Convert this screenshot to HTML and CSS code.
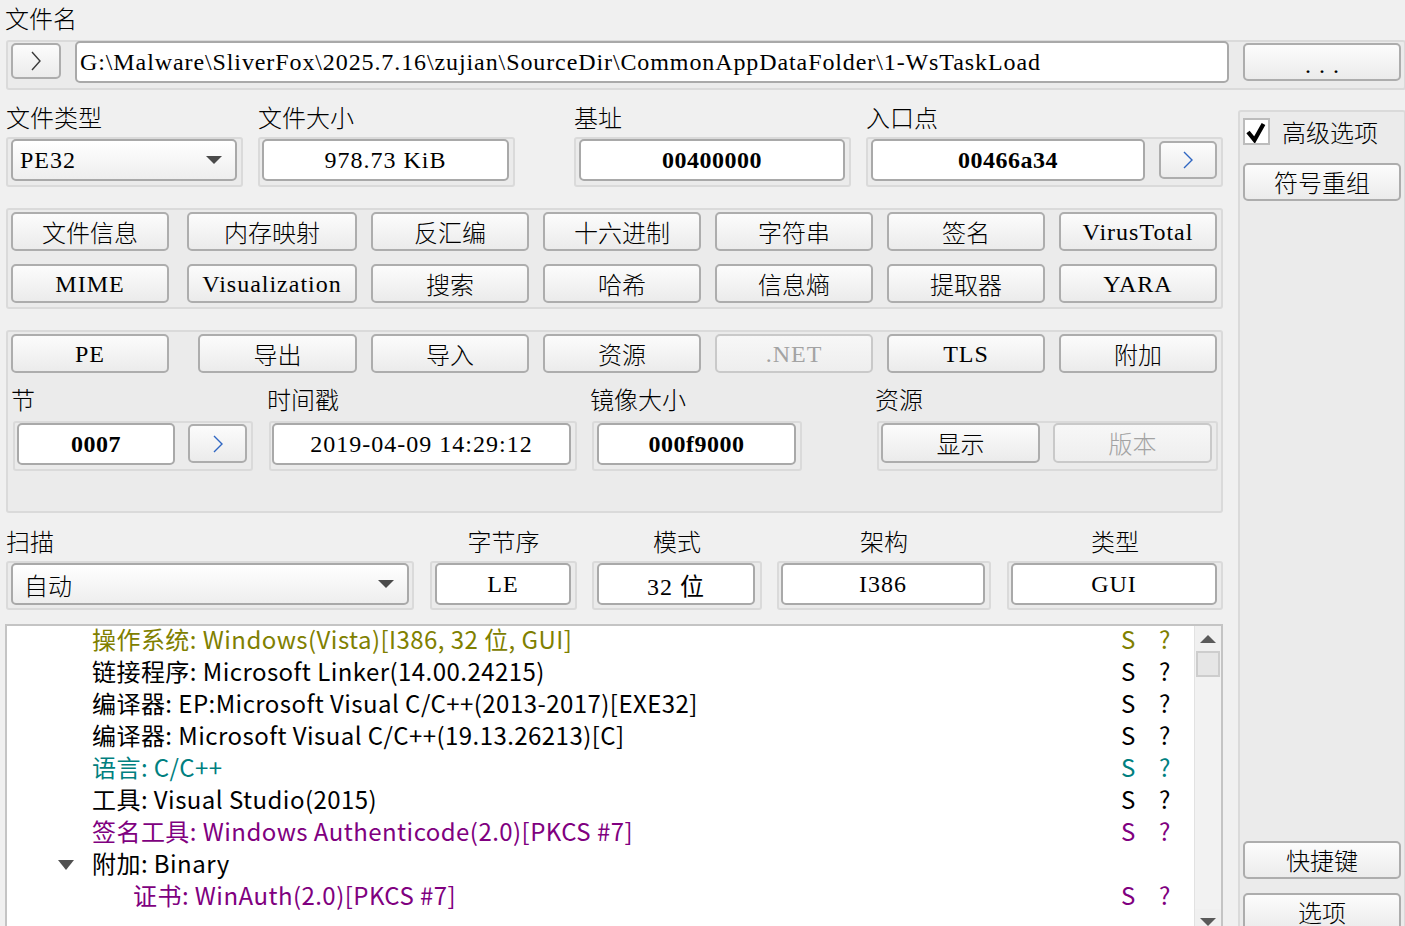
FILE: index.html
```html
<!DOCTYPE html>
<html lang="zh-CN">
<head>
<meta charset="utf-8">
<title>Detect It Easy</title>
<link rel="stylesheet" href="styles.css">
</head>
<body>
<div class="app">
  <div class="lbl top-lbl">文件名</div>
  <div class="frame file-frame">
    <div class="btn arrow-btn"><svg class="chev" width="12" height="20" viewBox="0 0 12 20"><polyline points="2,1 10,10 2,19" fill="none" stroke="#3a3a3a" stroke-width="1.4"/></svg></div>
    <div class="edit path">G:\Malware\SliverFox\2025.7.16\zujian\SourceDir\CommonAppDataFolder\1-WsTaskLoad</div>
    <div class="btn dots">...</div>
  </div>

  <div class="main">
    <div class="left">
      <div class="row2">
        <div class="field f-type">
          <div class="lbl">文件类型</div>
          <div class="frame box">
            <div class="combo c-type"><span>PE32</span><span class="caret"></span></div>
          </div>
        </div>
        <div class="field f-size">
          <div class="lbl">文件大小</div>
          <div class="frame box">
            <div class="edit center e-size">978.73 KiB</div>
          </div>
        </div>
        <div class="field f-base">
          <div class="lbl">基址</div>
          <div class="frame box">
            <div class="edit center bold e-base">00400000</div>
          </div>
        </div>
        <div class="field f-ep">
          <div class="lbl">入口点</div>
          <div class="frame box">
            <div class="edit center bold e-ep">00466a34</div>
            <div class="btn ep-btn"><svg class="chev" width="12" height="18" viewBox="0 0 12 18"><polyline points="2,1 10,9 2,17" fill="none" stroke="#2f66c2" stroke-width="1.4"/></svg></div>
          </div>
        </div>
      </div>

      <div class="frame tools">
        <div class="btn">文件信息</div>
        <div class="btn">内存映射</div>
        <div class="btn">反汇编</div>
        <div class="btn">十六进制</div>
        <div class="btn">字符串</div>
        <div class="btn">签名</div>
        <div class="btn lat">VirusTotal</div>
        <div class="btn lat">MIME</div>
        <div class="btn lat">Visualization</div>
        <div class="btn">搜索</div>
        <div class="btn">哈希</div>
        <div class="btn">信息熵</div>
        <div class="btn">提取器</div>
        <div class="btn lat">YARA</div>
      </div>

      <div class="frame pe">
        <div class="pe-btns">
          <div class="btn lat">PE</div>
          <div class="btn exp-btn">导出</div>
          <div class="btn">导入</div>
          <div class="btn">资源</div>
          <div class="btn lat disabled">.NET</div>
          <div class="btn lat">TLS</div>
          <div class="btn">附加</div>
        </div>
        <div class="pe-fields">
          <div class="pfield p-sec">
            <div class="lbl">节</div>
            <div class="frame pbox">
              <div class="edit center bold e-sec">0007</div>
              <div class="btn sec-btn"><svg class="chev" width="12" height="18" viewBox="0 0 12 18"><polyline points="2,1 10,9 2,17" fill="none" stroke="#2f66c2" stroke-width="1.4"/></svg></div>
            </div>
          </div>
          <div class="pfield p-time">
            <div class="lbl">时间戳</div>
            <div class="frame pbox">
              <div class="edit center e-time">2019-04-09 14:29:12</div>
            </div>
          </div>
          <div class="pfield p-img">
            <div class="lbl">镜像大小</div>
            <div class="frame pbox">
              <div class="edit center bold e-img">000f9000</div>
            </div>
          </div>
          <div class="pfield p-res">
            <div class="lbl">资源</div>
            <div class="frame pbox">
              <div class="btn res-btn">显示</div>
              <div class="btn res-btn disabled ver-btn">版本</div>
            </div>
          </div>
        </div>
      </div>

      <div class="row5">
        <div class="sfield s-scan">
          <div class="lbl">扫描</div>
          <div class="frame sbox">
            <div class="combo c-scan"><span class="cjk">自动</span><span class="caret"></span></div>
          </div>
        </div>
        <div class="sfield s-end">
          <div class="lbl mid">字节序</div>
          <div class="frame sbox"><div class="edit center e-end">LE</div></div>
        </div>
        <div class="sfield s-mode">
          <div class="lbl mid">模式</div>
          <div class="frame sbox"><div class="edit center e-mode">32 位</div></div>
        </div>
        <div class="sfield s-arch">
          <div class="lbl mid">架构</div>
          <div class="frame sbox"><div class="edit center e-arch">I386</div></div>
        </div>
        <div class="sfield s-kind">
          <div class="lbl mid">类型</div>
          <div class="frame sbox"><div class="edit center e-kind">GUI</div></div>
        </div>
      </div>

      <div class="tree">
        <div class="rows">
          <div class="row olive"><span class="t">操作系统: Windows(Vista)[I386, 32 位, GUI]</span><span class="s">S</span><span class="q">?</span></div>
          <div class="row"><span class="t">链接程序: Microsoft Linker(14.00.24215)</span><span class="s">S</span><span class="q">?</span></div>
          <div class="row"><span class="t">编译器: EP:Microsoft Visual C/C++(2013-2017)[EXE32]</span><span class="s">S</span><span class="q">?</span></div>
          <div class="row"><span class="t">编译器: Microsoft Visual C/C++(19.13.26213)[C]</span><span class="s">S</span><span class="q">?</span></div>
          <div class="row teal"><span class="t">语言: C/C++</span><span class="s">S</span><span class="q">?</span></div>
          <div class="row"><span class="t">工具: Visual Studio(2015)</span><span class="s">S</span><span class="q">?</span></div>
          <div class="row purple"><span class="t">签名工具: Windows Authenticode(2.0)[PKCS #7]</span><span class="s">S</span><span class="q">?</span></div>
          <div class="row"><span class="t exp"><span class="tri"></span>附加: Binary</span><span class="s"></span><span class="q"></span></div>
          <div class="row purple"><span class="t lvl2">证书: WinAuth(2.0)[PKCS #7]</span><span class="s">S</span><span class="q">?</span></div>
        </div>
        <div class="sb">
          <div class="sb-btn"><span class="up"></span></div>
          <div class="sb-thumb"></div>
          <div class="sb-track"></div>
          <div class="sb-btn"><span class="down"></span></div>
        </div>
      </div>
    </div>

    <div class="frame side">
      <div class="chk-row">
        <div class="chk"><svg width="23" height="23" viewBox="0 0 23 23"><path d="M3 12 L9.5 20 L18.5 4" fill="none" stroke="#000" stroke-width="4.2"/></svg></div>
        <div class="lbl chk-lbl">高级选项</div>
      </div>
      <div class="btn side-btn sym">符号重组</div>
      <div class="spacer"></div>
      <div class="btn side-btn">快捷键</div>
      <div class="btn side-btn opt">选项</div>
    </div>
  </div>
</div>
</body>
</html>
```

FILE: styles.css
```css
* { box-sizing: border-box; }
html, body { margin: 0; padding: 0; }
body {
  background: #f0f0f0;
  width: 1405px;
  height: 926px;
  overflow: hidden;
  font-family: "Liberation Serif", "Noto Sans CJK SC", serif;
  font-size: 24px;
  color: #000;
}
.app { padding-left: 6px; }

.lbl {
  font-family: "Noto Sans CJK SC", sans-serif;
  font-weight: 300;
  font-size: 24px;
  line-height: 28px;
  height: 28px;
  white-space: nowrap;
}
.top-lbl { height: 40px; padding-top: 4px; margin-left: -1px; }
.cjk { font-family: "Noto Sans CJK SC", sans-serif; font-weight: 300; letter-spacing: 0; }

.frame {
  background: #ebebeb;
  border: 2px solid #dadada;
  border-radius: 3px;
}

.btn {
  display: flex;
  align-items: center;
  justify-content: center;
  border: 2px solid #adadad;
  border-radius: 5px;
  background: linear-gradient(#fcfcfc, #ebebeb);
  font-family: "Noto Sans CJK SC", sans-serif;
  font-weight: 300;
  font-size: 24px;
  line-height: 28px;
  color: #000;
  white-space: nowrap;
}
.btn.lat { font-family: "Liberation Serif", serif; font-weight: 400; letter-spacing: 1px; }
.btn.disabled {
  color: #a3a3a3;
  border-color: #c9c9c9;
  background: linear-gradient(#f7f7f7, #eeeeee);
}

.edit {
  display: flex;
  align-items: center;
  height: 42px;
  background: #fff;
  border: 2px solid #a9a9a9;
  border-radius: 5px;
  font-family: "Liberation Serif", "Noto Sans CJK SC", serif;
  font-size: 24px;
  letter-spacing: 1px;
  white-space: nowrap;
  overflow: hidden;
}
.edit.center { justify-content: center; }
.edit.bold { font-weight: bold; letter-spacing: 0.5px; }

.combo {
  display: flex;
  align-items: center;
  justify-content: space-between;
  height: 42px;
  border: 2px solid #a9a9a9;
  border-radius: 5px;
  background: linear-gradient(#ffffff, #eeeeee);
  padding: 0 13px 0 7px;
  letter-spacing: 1px;
}
.caret {
  width: 0; height: 0;
  border-left: 8px solid transparent;
  border-right: 8px solid transparent;
  border-top: 8px solid #4a4a4a;
}

.chev { display: block; }

/* file row */
.file-frame {
  display: flex;
  align-items: flex-start;
  width: 1400px;
  height: 50px;
  padding-left: 3px;
}
.arrow-btn { width: 50px; height: 36px; margin-top: 1px; }
.path {
  width: 1154px;
  margin-left: 14px;
  margin-top: -1px;
  padding-left: 3px;
  letter-spacing: 0.9px;
}
.dots {
  width: 158px;
  height: 38px;
  margin-left: 14px;
  margin-top: 1px;
  font-family: "Liberation Serif", serif;
  letter-spacing: 8px;
  padding-left: 8px;
  padding-top: 6px;
}

/* main */
.main { display: flex; align-items: flex-start; }
.left { width: 1217px; flex: none; }

.row2 { display: flex; margin-top: 13px; }
.field { display: flex; flex-direction: column; }
.box {
  margin-top: 6px;
  height: 50px;
  display: flex;
  align-items: flex-start;
  padding-left: 3px;
}
.f-type { width: 237px; }
.f-size { width: 257px; margin-left: 15px; }
.f-base { width: 277px; margin-left: 59px; }
.f-ep { width: 357px; margin-left: 15px; }
.c-type { width: 226px; }
.e-size { width: 247px; margin-left: -1px; }
.e-base { width: 266px; }
.e-ep { width: 274px; }
.ep-btn { width: 58px; height: 38px; margin-left: 14px; margin-top: 2px; }

.tools {
  margin-top: 21px;
  height: 101px;
  padding: 2px 0 0 3px;
  display: grid;
  grid-template-columns: 162px 170px repeat(5, 158px);
  grid-auto-rows: 39px;
  column-gap: 14px;
  row-gap: 13px;
  align-content: start;
}
.tools .btn:nth-child(1), .tools .btn:nth-child(8) { width: 158px; }

.pe {
  margin-top: 21px;
  height: 183px;
  padding: 2px 0 0 3px;
}
.pe-btns {
  display: grid;
  grid-template-columns: 162px 170px repeat(5, 158px);
  grid-auto-rows: 39px;
  column-gap: 14px;
}
.pe-btns .btn:nth-child(1) { width: 158px; }
.pe-btns .exp-btn { width: 159px; justify-self: end; }

.pe-fields { display: flex; margin-top: 12px; padding-left: 2px; }
.pfield { display: flex; flex-direction: column; }
.pfield .lbl { margin-left: -2px; }
.pbox {
  margin-top: 8px;
  height: 50px;
  display: flex;
  align-items: flex-start;
}
.p-sec .pbox { width: 240px; padding-left: 2px; }
.e-sec { width: 158px; }
.sec-btn { width: 59px; height: 39px; margin-left: 13px; margin-top: 1px; }
.p-time { margin-left: 16px; }
.p-time .pbox { width: 308px; padding-left: 1px; }
.e-time { width: 299px; }
.p-img { margin-left: 15px; }
.p-img .pbox { width: 210px; padding-left: 3px; }
.e-img { width: 199px; }
.p-res { margin-left: 75px; }
.p-res .pbox { width: 341px; padding-left: 2px; }
.res-btn { width: 159px; height: 40px; }
.ver-btn { margin-left: 13px; }

.row5 { display: flex; margin-top: 14px; }
.sfield { display: flex; flex-direction: column; }
.lbl.mid { text-align: center; }
.sbox {
  margin-top: 6px;
  height: 49px;
  display: flex;
  align-items: flex-start;
  padding-left: 3px;
}
.s-scan { width: 408px; }
.c-scan { width: 398px; padding-left: 11px; }
.s-end { width: 147px; margin-left: 16px; }
.e-end { width: 136px; }
.s-mode { width: 170px; margin-left: 15px; }
.e-mode { width: 158px; }
.s-arch { width: 214px; margin-left: 15px; }
.e-arch { width: 204px; margin-left: -1px; }
.s-kind { width: 216px; margin-left: 16px; }
.e-kind { width: 206px; margin-left: -1px; }

/* results tree */
.tree {
  margin-top: 14px;
  margin-left: -1px;
  width: 1218px;
  height: 312px;
  background: #fff;
  border: 2px solid #c4c4c4;
  display: flex;
}
.rows {
  flex: 1;
  margin-top: -3px;
  font-family: "Noto Sans CJK SC", sans-serif;
  font-size: 24px;
  letter-spacing: 0.45px;
}
.row {
  display: flex;
  height: 32px;
  line-height: 32px;
  white-space: nowrap;
  color: #000;
}
.row.olive { color: #808000; }
.row.teal { color: #008080; }
.row.purple { color: #800080; }
.row .t { width: 1114px; padding-left: 85px; }
.row .t.lvl2 { padding-left: 126px; }
.row .t.exp { padding-left: 51px; display: flex; align-items: center; }
.tri {
  display: inline-block;
  width: 0; height: 0;
  border-left: 8px solid transparent;
  border-right: 8px solid transparent;
  border-top: 10px solid #505050;
  margin-right: 18px;
  margin-top: 4px;
}
.row .s { width: 38px; }
.row .q { flex: 1; }

.sb {
  width: 27px;
  flex: none;
  display: flex;
  flex-direction: column;
  background: #f2f2f2;
  border-left: 1px solid #e2e2e2;
}
.sb-btn {
  height: 25px;
  display: flex;
  align-items: center;
  justify-content: center;
  background: #f0f0f0;
}
.up {
  width: 0; height: 0;
  border-left: 8px solid transparent;
  border-right: 8px solid transparent;
  border-bottom: 8px solid #5a5a5a;
}
.down {
  width: 0; height: 0;
  border-left: 8px solid transparent;
  border-right: 8px solid transparent;
  border-top: 8px solid #5a5a5a;
}
.sb-thumb {
  height: 26px;
  background: #e6e6e6;
  border: 2px solid #cdcdcd;
  margin: 0 1px;
}
.sb-track { flex: 1; }

/* side panel */
.side {
  margin-left: 15px;
  margin-top: 20px;
  width: 168px;
  height: 828px;
  flex: none;
  display: flex;
  flex-direction: column;
  padding: 6px 0 5px 3px;
}
.chk-row { display: flex; align-items: center; height: 27px; }
.chk {
  width: 27px; height: 27px;
  background: #fff;
  border: 2px solid #bcbcbc;
}
.chk svg { display: block; }
.chk-lbl { margin-left: 12px; }
.side-btn { width: 158px; height: 38px; }
.sym { margin-top: 18px; }
.spacer { flex: 1; }
.opt { margin-top: 14px; }
```
